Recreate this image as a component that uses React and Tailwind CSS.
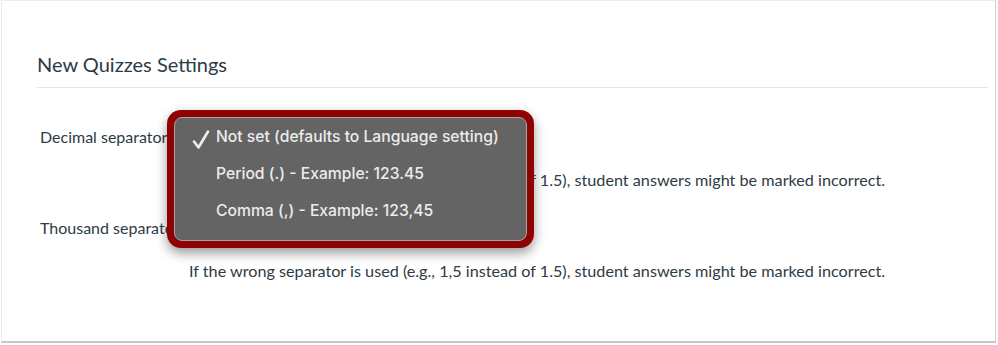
import React from 'react'

const options = [
  { label: 'Not set (defaults to Language setting)', checked: true },
  { label: 'Period (.) - Example: 123.45' },
  { label: 'Comma (,) - Example: 123,45' },
]

const hint =
  'If the wrong separator is used (e.g., 1,5 instead of 1.5), student answers might be marked incorrect.'

const SettingRow = ({ label, className = '' }) => (
  <div className={`grid grid-cols-[152px_1fr] ${className}`}>
    <div className="flex h-[38px] items-center pl-[3px] text-[16px] text-[#2d3b45]">{label}</div>
    <div>
      <div className="h-[38px] w-[320px] rounded border border-[#c7cdd1] bg-white" />
      <p className="mt-[12px] text-[16.2px] leading-[24px] text-[#2d3b45]">{hint}</p>
    </div>
  </div>
)

const Dropdown = () => (
  <div className="absolute left-[167px] top-[110px] h-[138px] w-[367px] rounded-[14px] bg-[#8e0202] p-[7px] shadow-[0_5px_12px_rgba(0,0,0,0.4)]">
    <div className="h-full rounded-[8px] border border-[#a3a3a3] bg-[#646464] font-['Inter',sans-serif] text-[15.7px] font-medium text-[#ececec]">
      {options.map((opt) => (
        <div key={opt.label} className="relative flex h-[37px] items-center pl-[41px]">
          {opt.checked && (
            <svg className="absolute left-[17px] top-[12px]" width="18" height="20" viewBox="0 0 18 20">
              <path d="M2 11.5 L6.5 17.5 L16 1.5" fill="none" stroke="#eeeeee" strokeWidth="2.6" strokeLinecap="round" strokeLinejoin="round" />
            </svg>
          )}
          {opt.label}
        </div>
      ))}
    </div>
  </div>
)

export default function App() {
  return (
    <div className="relative h-[345px] w-[998px] bg-white font-['Lato',sans-serif]">
      <div className="ml-[1px] h-[343px] w-[995px] border border-[#ececec] border-b-2 border-r-[#cfcfcf] border-b-[#c6c6c6] pl-[35px] pr-[7px]">
        <div className="border-b border-[#e4e4e4] pb-[8px] pt-[48px]">
          <h2 className="text-[20px] leading-[30px] text-[#2d3b45]">New Quizzes Settings</h2>
        </div>
        <SettingRow label="Decimal separator" className="mt-[30px]" />
        <SettingRow label="Thousand separator" className="mt-[17px]" />
      </div>
      <Dropdown />
    </div>
  )
}
